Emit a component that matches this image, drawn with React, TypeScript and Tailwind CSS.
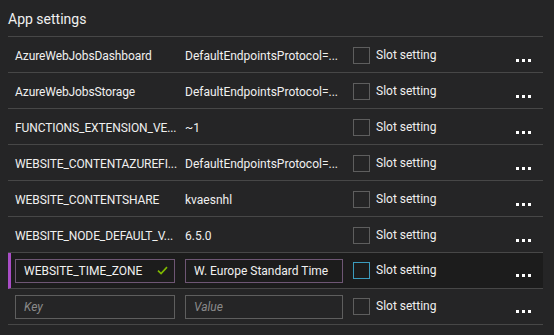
const rows = [
  { key: 'AzureWebJobsDashboard', value: 'DefaultEndpointsProtocol=...' },
  { key: 'AzureWebJobsStorage', value: 'DefaultEndpointsProtocol=...' },
  { key: 'FUNCTIONS_EXTENSION_VE...', value: '~1' },
  { key: 'WEBSITE_CONTENTAZUREFI...', value: 'DefaultEndpointsProtocol=...' },
  { key: 'WEBSITE_CONTENTSHARE', value: 'kvaesnhl' },
  { key: 'WEBSITE_NODE_DEFAULT_V...', value: '6.5.0' },
]

const Checkbox = ({ focused }: { focused?: boolean }) => (
  <span
    className={`block shrink-0 w-[17px] h-[17px] border ${focused ? 'border-[#3b9bbd]' : 'border-[#5e5e5e]'}`}
  />
)

const Dots = () => (
  <div className="ml-auto mr-[12px] mt-[9px] flex gap-[3px]">
    <span className="block w-[3px] h-[3px] bg-white" />
    <span className="block w-[3px] h-[3px] bg-white" />
    <span className="block w-[3px] h-[3px] bg-white" />
  </div>
)

const Slot = ({ focused }: { focused?: boolean }) => (
  <div className="ml-[10px] shrink-0 flex items-center gap-[6px]">
    <Checkbox focused={focused} />
    <span className="text-[#f0f0f0] -mt-[2px] whitespace-nowrap">Slot setting</span>
  </div>
)

export default function App() {
  return (
    <div
      className="w-[554px] h-[335px] bg-[#252526] text-[12px] text-[#f0f0f0] overflow-hidden"
      style={{ fontFamily: 'Roboto, "Noto Sans", sans-serif' }}
    >
      <div className="w-[535px] ml-[8px]">
        <div className="h-[37px] flex items-center border-b border-[#474747]">
          <h2 className="text-[14px] mt-[3px]">App settings</h2>
        </div>

        {rows.map((r) => (
          <div key={r.key} className="h-[36px] flex items-center border-b border-[#474747] pl-[7px] pt-[2px]">
            <div className="w-[160px] shrink-0 whitespace-nowrap tracking-[-0.1px]">{r.key}</div>
            <div className="w-[158px] shrink-0 ml-[10px] whitespace-nowrap">{r.value}</div>
            <Slot />
            <Dots />
          </div>
        ))}

        <div className="h-[36px] flex items-center border-b border-[#474747] bg-[#1c1c1c] border-l-[3px] border-l-[#a94dc6] pl-[4px]">
          <div className="w-[160px] shrink-0 h-[24px] border border-[#6e5674] flex items-center pl-[8px] pr-[6px]">
            <span className="whitespace-nowrap">WEBSITE_TIME_ZONE</span>
            <svg viewBox="0 0 12 10" className="ml-auto w-[11px] h-[9px]">
              <path d="M1 5.2 L4.4 8.4 L11 1.2" fill="none" stroke="#7fba00" strokeWidth="1.8" />
            </svg>
          </div>
          <div className="w-[158px] shrink-0 h-[24px] ml-[10px] border border-[#6e5674] flex items-center pl-[8px] overflow-hidden">
            <span className="whitespace-nowrap">W. Europe Standard Time</span>
          </div>
          <Slot focused />
          <Dots />
        </div>

        <div className="h-[36px] flex items-center border-b border-[#474747] pl-[7px]">
          <div className="w-[160px] shrink-0 h-[24px] border border-[#5e5e5e] flex items-center pl-[8px] italic text-[#8a8a8a]">
            Key
          </div>
          <div className="w-[158px] shrink-0 h-[24px] ml-[10px] border border-[#5e5e5e] flex items-center pl-[8px] italic text-[#8a8a8a]">
            Value
          </div>
          <Slot />
          <Dots />
        </div>
      </div>
    </div>
  )
}
